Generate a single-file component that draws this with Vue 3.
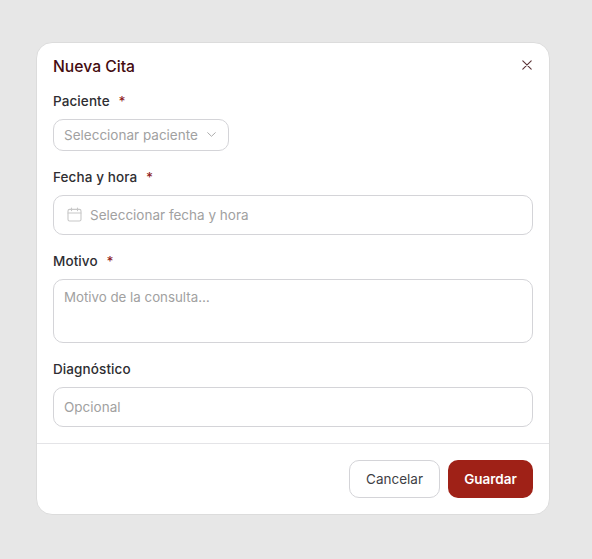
<script setup>
import { ref } from 'vue'

const motivo = ref('')
const diagnostico = ref('')
</script>

<template>
  <div class="overlay">
    <div class="dialog">
      <div class="head">
        <h2 class="title">Nueva Cita</h2>
        <button class="close" aria-label="Cerrar">
          <svg width="10" height="10" viewBox="0 0 10 10" fill="none" stroke="#5a3235" stroke-width="1.1" stroke-linecap="round">
            <path d="M.8.8 9.2 9.2M9.2.8.8 9.2" />
          </svg>
        </button>
      </div>

      <div class="body">
        <div class="field f-paciente">
          <label class="label">Paciente <span class="req">*</span></label>
          <div class="select">
            <span>Seleccionar paciente</span>
            <svg width="9" height="5" viewBox="0 0 9 5" fill="none" stroke="#acacac" stroke-width="1" stroke-linecap="round" stroke-linejoin="round">
              <path d="M.7.7 4.5 4.3 8.3.7" />
            </svg>
          </div>
        </div>

        <div class="field f-fecha">
          <label class="label">Fecha y hora <span class="req">*</span></label>
          <div class="date">
            <svg width="15" height="15" viewBox="0 0 15 15" fill="none" stroke="#c8c8c8" stroke-width="1.1" stroke-linecap="round">
              <rect x="1" y="2.4" width="13" height="11.6" rx="1.6" />
              <path d="M1 6h13M4.5 1v2.6M10.5 1v2.6" />
            </svg>
            <span>Seleccionar fecha y hora</span>
          </div>
        </div>

        <div class="field f-motivo">
          <label class="label">Motivo <span class="req">*</span></label>
          <textarea v-model="motivo" class="area" placeholder="Motivo de la consulta…"></textarea>
        </div>

        <div class="field">
          <label class="label">Diagnóstico</label>
          <input v-model="diagnostico" class="input" placeholder="Opcional" />
        </div>
      </div>

      <div class="foot">
        <button class="btn cancel">Cancelar</button>
        <button class="btn save">Guardar</button>
      </div>
    </div>
  </div>
</template>

<style>
html, body {
  margin: 0;
  background: #e7e7e7;
}
</style>

<style scoped>
.overlay {
  box-sizing: border-box;
  width: 592px;
  height: 559px;
  padding: 42px 42px 0 36px;
  background: #e7e7e7;
  font-family: Inter, "Liberation Sans", sans-serif;
}

.dialog {
  box-sizing: border-box;
  width: 514px;
  height: 473px;
  background: #fff;
  border: 1px solid #dcdcdc;
  border-radius: 16px;
}

.head {
  display: flex;
  align-items: center;
  justify-content: space-between;
  height: 47px;
  padding: 0 16px;
}

.title {
  margin: 0 0 1px;
  font-size: 15.7px;
  font-weight: 500;
  color: #440c10;
}

.close {
  display: flex;
  margin: 0 1px 4px 0;
  padding: 0;
  border: 0;
  background: none;
}

.body {
  display: flex;
  flex-direction: column;
  height: 353px;
  padding: 0 16px;
}

.field {
  display: flex;
  flex-direction: column;
  gap: 8.5px;
}

.f-paciente {
  height: 76px;
}

.f-fecha {
  height: 84px;
}

.f-motivo {
  height: 108px;
}

.label {
  height: 20px;
  font-size: 13.5px;
  font-weight: 500;
  line-height: 22px;
  letter-spacing: 0.1px;
  color: #2e2e32;
}

.req {
  margin-left: 5px;
  color: #8f1d1d;
}

.select,
.date,
.area,
.input {
  box-sizing: border-box;
  border: 1px solid #d4d4d8;
  border-radius: 10px;
  background: #fff;
  font-family: inherit;
  font-size: 13.5px;
  color: #a1a1a1;
}

.select {
  display: flex;
  align-items: center;
  justify-content: space-between;
  width: 176px;
  height: 32px;
  padding: 0 12px 0 10px;
}

.date {
  display: flex;
  align-items: center;
  gap: 8px;
  height: 40px;
  padding: 0 13px;
}

.area {
  display: block;
  width: 100%;
  height: 64px;
  padding: 9px 10px;
  font-size: 13.3px;
  outline: none;
  resize: none;
}

.input {
  width: 100%;
  height: 40px;
  padding: 0 10px;
  outline: none;
}

.area::placeholder,
.input::placeholder {
  color: #a1a1a1;
  opacity: 1;
}

.foot {
  display: flex;
  justify-content: flex-end;
  gap: 8px;
  padding: 15.5px 16px 0;
  border-top: 1px solid #e4e4e7;
}

.btn {
  height: 38px;
  border-radius: 10px;
  font-family: inherit;
  font-size: 13.5px;
}

.cancel {
  width: 91px;
  border: 1px solid #d4d4d8;
  background: #fff;
  color: #3f3f46;
}

.save {
  width: 85px;
  border: 0;
  background: #9f2117;
  color: #fff;
  font-weight: 600;
}
</style>
